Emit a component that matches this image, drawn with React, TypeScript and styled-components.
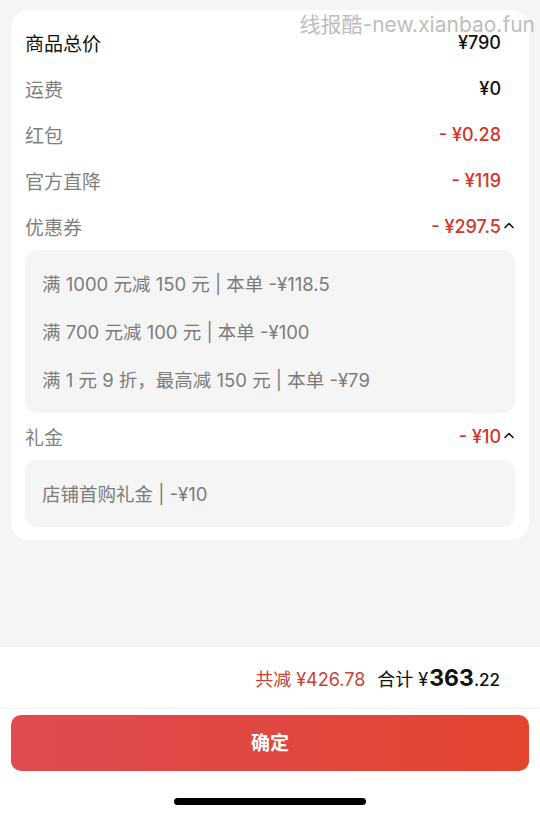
import React from "react";
import styled, { createGlobalStyle } from "styled-components";

const GlobalStyle = createGlobalStyle`
    html, body {
        margin: 0;
        padding: 0;
        background: #f5f5f5;
    }
    body {
        font-family: "Inter", "Noto Sans CJK SC", "Noto Sans", sans-serif;
        -webkit-font-smoothing: antialiased;
    }
`;

const Page = styled.div`
    position: relative;
    width: 540px;
    height: 817px;
    display: flex;
    flex-direction: column;
    background: #f5f5f5;
    overflow: hidden;
`;

const Watermark = styled.div`
    position: absolute;
    top: 8px;
    right: 5px;
    font-size: 21px;
    color: #bdbdbd;
    pointer-events: none;
`;

const Content = styled.div`
    flex: 1;
    padding: 10px 11px 0;
`;

const Card = styled.div`
    background: #fff;
    border-radius: 18px;
    padding: 9px 14px 13px 14px;
`;

const Row = styled.div`
    height: 46px;
    display: flex;
    align-items: center;
    justify-content: space-between;
`;

const Label = styled.span<{ $dark?: boolean }>`
    font-size: 19px;
    color: ${({ $dark }) => ($dark ? "#111" : "#7f7f7f")};
`;

const Value = styled.span<{ $red?: boolean; $arrow?: boolean }>`
    display: flex;
    align-items: center;
    font-size: 18px;
    font-weight: 500;
    color: ${({ $red }) => ($red ? "#d2352a" : "#111")};
    margin-right: ${({ $arrow }) => ($arrow ? "0" : "14px")};
`;

const Chevron = styled.svg`
    width: 12px;
    height: 8px;
    margin-left: 2px;
    margin-top: -2px;
`;

const DetailBox = styled.div`
    background: #f5f5f5;
    border-radius: 12px;
    margin-top: 1px;
    padding: 9px 17px 10px;
`;

const DetailLine = styled.div`
    height: 48px;
    display: flex;
    align-items: center;
    font-size: 18.5px;
    color: #7c7c7c;
`;

const Footer = styled.div`
    background: #fff;
    display: flex;
    flex-direction: column;
    align-items: stretch;
`;

const Summary = styled.div`
    height: 61px;
    display: flex;
    align-items: center;
    justify-content: flex-end;
    padding-right: 40px;
    border-bottom: 1px solid #f2f2f2;
`;

const Saved = styled.span`
    font-size: 18px;
    color: #c94237;
    margin-right: 12px;
`;

const TotalLabel = styled.span`
    font-size: 18px;
    color: #111;
    display: flex;
    align-items: baseline;
`;

const TotalInt = styled.span`
    font-size: 23px;
    font-weight: 700;
    margin-left: 1px;
`;

const TotalDec = styled.span`
    font-size: 17px;
    font-weight: 500;
`;

const ConfirmButton = styled.button`
    margin: 6px 11px 0;
    height: 56px;
    padding: 0 0 4px;
    border: none;
    border-radius: 10px;
    background: linear-gradient(90deg, #e14a50 0%, #e04842 50%, #e4452f 100%);
    color: #fff;
    font-family: inherit;
    font-size: 19px;
    font-weight: 700;
`;

const HomeBar = styled.div`
    height: 46px;
    display: flex;
    align-items: center;
    justify-content: center;
`;

const Indicator = styled.div`
    width: 192px;
    height: 7px;
    border-radius: 4px;
    background: #000;
    margin-top: 15px;
`;

const Up = () => (
    <Chevron viewBox="0 0 12 8">
        <path d="M2 6.5 L6 2.5 L10 6.5" fill="none" stroke="#111" strokeWidth="1.6" strokeLinecap="round" strokeLinejoin="round" />
    </Chevron>
);

const App: React.FC = () => {
    return (
        <Page>
            <GlobalStyle />
            <Content>
                <Card>
                    <Row>
                        <Label $dark>商品总价</Label>
                        <Value>¥790</Value>
                    </Row>
                    <Row>
                        <Label>运费</Label>
                        <Value>¥0</Value>
                    </Row>
                    <Row>
                        <Label>红包</Label>
                        <Value $red>- ¥0.28</Value>
                    </Row>
                    <Row>
                        <Label>官方直降</Label>
                        <Value $red>- ¥119</Value>
                    </Row>
                    <Row>
                        <Label>优惠券</Label>
                        <Value $red $arrow>
                            - ¥297.5
                            <Up />
                        </Value>
                    </Row>
                    <DetailBox>
                        <DetailLine>满 1000 元减 150 元 | 本单 -¥118.5</DetailLine>
                        <DetailLine>满 700 元减 100 元 | 本单 -¥100</DetailLine>
                        <DetailLine>满 1 元 9 折，最高减 150 元 | 本单 -¥79</DetailLine>
                    </DetailBox>
                    <Row>
                        <Label>礼金</Label>
                        <Value $red $arrow>
                            - ¥10
                            <Up />
                        </Value>
                    </Row>
                    <DetailBox>
                        <DetailLine>店铺首购礼金 | -¥10</DetailLine>
                    </DetailBox>
                </Card>
            </Content>
            <Footer>
                <Summary>
                    <Saved>共减 ¥426.78</Saved>
                    <TotalLabel>
                        合计 ¥<TotalInt>363</TotalInt>
                        <TotalDec>.22</TotalDec>
                    </TotalLabel>
                </Summary>
                <ConfirmButton>确定</ConfirmButton>
                <HomeBar>
                    <Indicator />
                </HomeBar>
            </Footer>
            <Watermark>线报酷-new.xianbao.fun</Watermark>
        </Page>
    );
};

export default App;
